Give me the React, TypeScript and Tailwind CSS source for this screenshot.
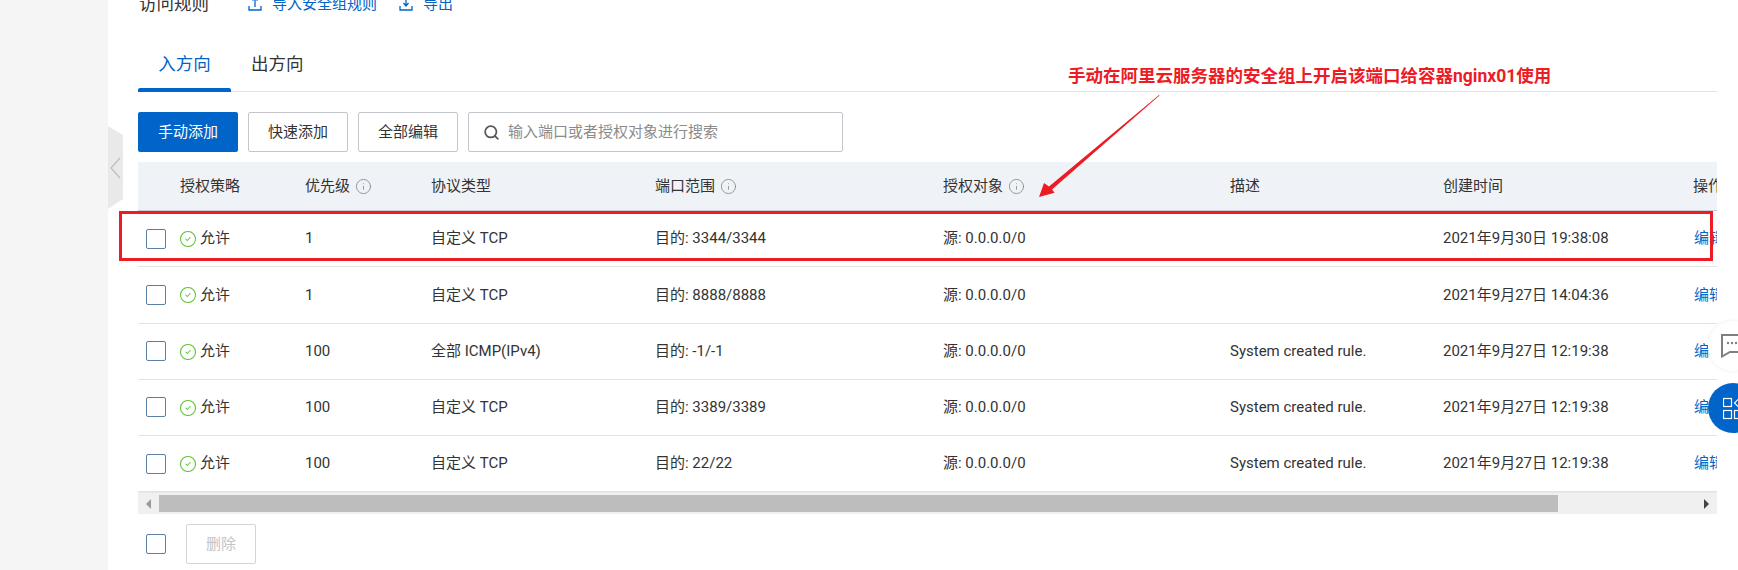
import React from 'react';
import { CircleCheck, Info, Search } from 'lucide-react';

interface Rule {
  priority: string;
  protocol: string;
  port: string;
  desc: string;
  created: string;
}

const rules: Rule[] = [
  { priority: '1', protocol: '自定义 TCP', port: '目的: 3344/3344', desc: '', created: '2021年9月30日 19:38:08' },
  { priority: '1', protocol: '自定义 TCP', port: '目的: 8888/8888', desc: '', created: '2021年9月27日 14:04:36' },
  { priority: '100', protocol: '全部 ICMP(IPv4)', port: '目的: -1/-1', desc: 'System created rule.', created: '2021年9月27日 12:19:38' },
  { priority: '100', protocol: '自定义 TCP', port: '目的: 3389/3389', desc: 'System created rule.', created: '2021年9月27日 12:19:38' },
  { priority: '100', protocol: '自定义 TCP', port: '目的: 22/22', desc: 'System created rule.', created: '2021年9月27日 12:19:38' },
];

const gridCols = 'grid grid-cols-[42px_125px_126px_224px_288px_287px_213px_250px_100px] items-center';

const Checkbox: React.FC = () => (
  <span className="block h-5 w-5 rounded-[2px] border border-[#5b7fa6] bg-white" />
);

const InfoIcon: React.FC = () => <Info size={17} strokeWidth={1.1} className="ml-[5px] text-[#808080]" />;

const Tray: React.FC<{ up: boolean }> = ({ up }) => (
  <svg width="14" height="14" viewBox="0 0 14 14" fill="none" stroke="#0064c8" strokeWidth="1.3" className="mr-[10px]">
    <path d="M1 9v4h12V9" />
    {up ? <path d="M7 10V1M4.5 3.5 7 1l2.5 2.5" /> : <path d="M7 0v8M4.5 6 7 9l2.5-3" />}
  </svg>
);

const Button: React.FC<{ primary?: boolean; children: React.ReactNode }> = ({ primary, children }) => (
  <button
    className={
      primary
        ? 'flex h-10 w-[100px] items-center justify-center rounded-[2px] bg-[#0064c8] text-[15px] text-white'
        : 'flex h-10 w-[100px] items-center justify-center rounded-[2px] border border-[#c4c6cc] bg-white text-[15px] text-[#333]'
    }
  >
    {children}
  </button>
);

const App: React.FC = () => {
  return (
    <div className="relative flex h-[570px] w-[1738px] overflow-hidden bg-white font-['Roboto','Noto_Sans_CJK_SC',sans-serif] text-[15px] text-[#333]">
      <div className="w-[108px] shrink-0 bg-[#f5f5f5]" />

      <main className="w-[1609px] pl-[30px]">
        <div className="-mt-[10px] flex h-[28px] items-center">
          <span className="w-[110px] pl-px text-[17.5px]">访问规则</span>
          <a className="flex w-[151px] items-center text-[#0064c8]"><Tray up />导入安全组规则</a>
          <a className="flex items-center text-[#0064c8]"><Tray up={false} />导出</a>
        </div>

        <div className="mt-[31px] flex h-[43px] border-b border-[#e3e3e3] text-[17.5px]">
          <div className="relative flex w-[93px] items-start justify-center pt-[2px] text-[#0064c8]">
            入方向
            <span className="absolute -bottom-px left-0 right-0 h-1 rounded-t-[2px] bg-[#0064c8]" />
          </div>
          <div className="flex items-start px-5 pt-[2px]">出方向</div>
        </div>

        <div className="mt-5 flex gap-[10px]">
          <Button primary>手动添加</Button>
          <Button>快速添加</Button>
          <Button>全部编辑</Button>
          <div className="flex h-10 w-[375px] items-center rounded-[2px] border border-[#c4c6cc] pl-[14px]">
            <Search size={17} strokeWidth={2.4} className="text-[#555]" />
            <span className="ml-[8px] text-[#8b8b8b]">输入端口或者授权对象进行搜索</span>
          </div>
        </div>

        <div className="mt-[10px] w-[1579px] overflow-hidden">
          <div className={`${gridCols} h-[49px] border-b border-[#c9ccd1] bg-[#eff2f7]`}>
            <span />
            <span>授权策略</span>
            <span className="flex items-center">优先级<InfoIcon /></span>
            <span>协议类型</span>
            <span className="flex items-center">端口范围<InfoIcon /></span>
            <span className="flex items-center">授权对象<InfoIcon /></span>
            <span>描述</span>
            <span>创建时间</span>
            <span className="whitespace-nowrap">操作</span>
          </div>

          {rules.map((rule, i) => (
            <div key={i} className={`${gridCols} h-[56.25px] border-b border-[#e3e3e3] last:border-b-0`}>
              <span className="pl-2"><Checkbox /></span>
              <span className="flex items-center">
                <CircleCheck size={18} strokeWidth={1.4} className="mr-[3px] mt-px -ml-px text-[#5bc22f]" />
                允许
              </span>
              <span>{rule.priority}</span>
              <span>{rule.protocol}</span>
              <span>{rule.port}</span>
              <span>源: 0.0.0.0/0</span>
              <span>{rule.desc}</span>
              <span>{rule.created}</span>
              <a className="pl-px whitespace-nowrap text-[#0064c8]">编辑</a>
            </div>
          ))}

          <div className="flex h-[22px] items-center border-t border-[#e8e8e8] bg-[#f0f0f0]">
            <span className="ml-2 h-0 w-0 border-y-[5px] border-r-[5px] border-y-transparent border-r-[#9a9a9a]" />
            <span className="ml-2 h-[17px] w-[1399px] bg-[#bdbdbd]" />
            <span className="ml-[146px] h-0 w-0 border-y-[5px] border-l-[5px] border-y-transparent border-l-[#444]" />
          </div>
        </div>

        <div className="mt-[10px] flex items-center pl-2">
          <Checkbox />
          <button className="ml-5 flex h-10 w-[70px] items-center justify-center rounded-[2px] border border-[#d3d5d9] text-[#c4c4c4]">
            删除
          </button>
        </div>
      </main>

      {/* sidebar collapse handle */}
      <div className="absolute left-[108px] top-[126px] flex h-[83px] w-[15px] items-center justify-center bg-[#e9e9e9] [clip-path:polygon(0_0,100%_11%,100%_88%,0_100%)]">
        <svg width="11" height="22" viewBox="0 0 11 22" fill="none" stroke="#bdbdbd" strokeWidth="1.2">
          <path d="M10 1 1 11l9 10" />
        </svg>
      </div>

      {/* floating help buttons */}
      <div className="absolute left-[1708px] top-[321px] h-[50px] w-[50px] rounded-full bg-white shadow-[0_0_4px_rgba(0,0,0,0.08)]">
        <svg width="30" height="24" viewBox="0 0 30 24" fill="none" className="absolute left-[13px] top-[13px]">
          <path d="M1 1h28v17H9l-8 4.5z" stroke="#7f7f7f" strokeWidth="2" />
          <circle cx="7" cy="9" r="1.2" fill="#7f7f7f" />
          <circle cx="11" cy="9" r="1.2" fill="#7f7f7f" />
          <circle cx="15" cy="9" r="1.2" fill="#7f7f7f" />
        </svg>
      </div>
      <div className="absolute left-[1708px] top-[383px] h-[50px] w-[50px] rounded-full bg-[#0064c8]">
        <svg width="30" height="26" viewBox="0 0 30 26" fill="none" stroke="#fff" strokeWidth="1.2" className="absolute left-[15px] top-[14px]">
          <rect x="0.5" y="1.5" width="8" height="8" />
          <rect x="0.5" y="13.5" width="8" height="8" />
          <rect x="11.5" y="13.5" width="8" height="8" />
          <path d="M17 0.5 11.5 6l5.5 5.5 5.5-5.5z" />
        </svg>
      </div>

      {/* screenshot annotation: red box, arrow and note */}
      <div className="pointer-events-none absolute left-[119px] top-[211px] h-[50px] w-[1594px] border-[3px] border-[#ed1c24]" />
      <span className="absolute left-[1068px] top-[63px] whitespace-nowrap text-[17.5px] font-bold text-[#ed1c24]">
        手动在阿里云服务器的安全组上开启该端口给容器nginx01使用
      </span>
      <svg width="130" height="110" viewBox="1035 92 130 110" className="pointer-events-none absolute left-[1035px] top-[92px]">
        <path d="M1159 95 1049 186.5 1044 183 1039 197 1054.6 192.7 1052 189.5 1159.5 95.5z" fill="#ed1c24" />
      </svg>
    </div>
  );
};

export default App;
